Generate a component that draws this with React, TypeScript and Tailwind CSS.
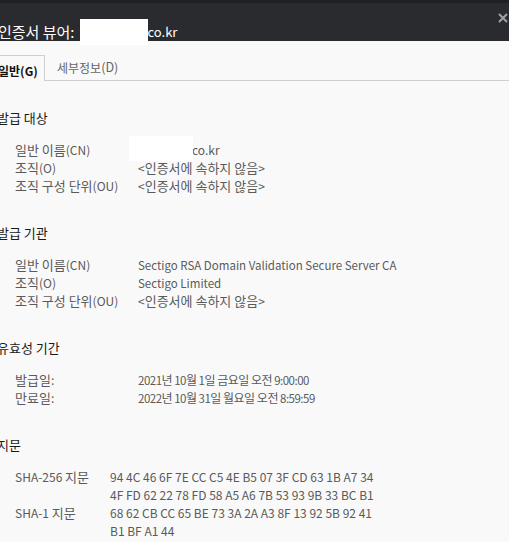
import React from "react";

const font = { fontFamily: '"Noto Sans CJK KR", "Noto Sans", sans-serif' };

function T({ text, ko = "text-[13px]", la = "text-[12px]" }: { text: string; ko?: string; la?: string }) {
  const parts = text.split(/([\uAC00-\uD7A3]+(?: [\uAC00-\uD7A3]+)*)/).filter((p) => p.length > 0);
  return (
    <>
      {parts.map((p, i) =>
        /[\uAC00-\uD7A3]/.test(p) ? (
          <span key={i} className={ko}>{p}</span>
        ) : (
          <span key={i} className={la}>{p}</span>
        )
      )}
    </>
  );
}

function Row({ label, children }: { label: string; children: React.ReactNode }) {
  return (
    <div className="flex h-[18px] items-center leading-[18px] whitespace-pre">
      <div className="w-[138px] shrink-0 pl-[15px]"><T text={label} /></div>
      <div>{children}</div>
    </div>
  );
}

function FpRow({ label, lines }: { label: string; lines: string[] }) {
  return (
    <div className="flex leading-[18px] whitespace-pre">
      <div className="w-[110px] shrink-0 pl-[15px]"><T text={label} /></div>
      <div className="flex flex-col text-[12px]">
        {lines.map((l) => (
          <div key={l} className="h-[18px]">{l}</div>
        ))}
      </div>
    </div>
  );
}

function Section({ title, children, mb = "mb-[29px]" }: { title: string; children: React.ReactNode; mb?: string }) {
  return (
    <div className={mb}>
      <div className="h-[18px] text-[13px] leading-[18px] text-[#1a1a1a] ml-[-3px]">{title}</div>
      <div className="mt-[14px] text-[12px] text-[#5a5a5a]">{children}</div>
    </div>
  );
}

export default function App() {
  const notIn = "<인증서에 속하지 않음>";
  return (
    <div className="w-[509px] h-[542px] overflow-hidden bg-[#f9f9f9]" style={font}>
      <div className="h-[41px] bg-[#2a2b2f] border-t-[3px] border-[#1f2023] relative">
        <div className="absolute left-[-2px] top-[16px] flex h-[26px] items-center text-white z-10 whitespace-pre">
          <span className="text-[15px]">인증서 뷰어:</span>
          <span className="inline-block w-[68px] h-[26px] bg-white ml-[5px]" />
          <span className="text-[13px]">co.kr</span>
        </div>
        <svg className="absolute right-[1px] top-[10px]" width="10" height="10" viewBox="0 0 10 10">
          <path d="M1 1 L9 9 M9 1 L1 9" stroke="#9ea1a6" strokeWidth="2" />
        </svg>
      </div>
      <div className="mt-[14px] flex h-[26px]">
        <div className="w-[46px] ml-[-1px] border-t border-r border-[#cfcfcf] flex items-center font-bold text-[#111] whitespace-pre">
          <span className="ml-[-1px]"><T text="일반(G)" ko="text-[12px]" la="text-[12px]" /></span>
        </div>
        <div className="flex-1 border-b border-[#cfcfcf] flex items-center pl-[12px] text-[#666] whitespace-pre">
          <T text="세부정보(D)" ko="text-[12px]" la="text-[12.5px]" />
        </div>
      </div>
      <div className="pt-[28px]">
        <Section title="발급 대상">
          <Row label="일반 이름(CN)">
            <span className="flex items-center">
              <span className="inline-block w-[64px] h-[25px] bg-white ml-[-9px] relative top-[-2px]" />
              <span className="ml-[-1px]">co.kr</span>
            </span>
          </Row>
          <Row label="조직(O)"><T text={notIn} /></Row>
          <Row label="조직 구성 단위(OU)"><T text={notIn} /></Row>
        </Section>
        <Section title="발급 기관">
          <Row label="일반 이름(CN)"><span className="text-[11.5px]">Sectigo RSA Domain Validation Secure Server CA</span></Row>
          <Row label="조직(O)"><span className="text-[11.5px]">Sectigo Limited</span></Row>
          <Row label="조직 구성 단위(OU)"><T text={notIn} /></Row>
        </Section>
        <Section title="유효성 기간">
          <Row label="발급일:"><span className="tracking-[-0.5px]"><T text="2021년 10월 1일 금요일 오전 9:00:00" ko="text-[12px]" la="text-[11.5px]" /></span></Row>
          <Row label="만료일:"><span className="tracking-[-0.5px]"><T text="2022년 10월 31일 월요일 오전 8:59:59" ko="text-[12px]" la="text-[11.5px]" /></span></Row>
        </Section>
        <Section title="지문" mb="">
          <FpRow label="SHA-256 지문" lines={["94 4C 46 6F 7E CC C5 4E B5 07 3F CD 63 1B A7 34", "4F FD 62 22 78 FD 58 A5 A6 7B 53 93 9B 33 BC B1"]} />
          <FpRow label="SHA-1 지문" lines={["68 62 CB CC 65 BE 73 3A 2A A3 8F 13 92 5B 92 41", "B1 BF A1 44"]} />
        </Section>
      </div>
    </div>
  );
}
